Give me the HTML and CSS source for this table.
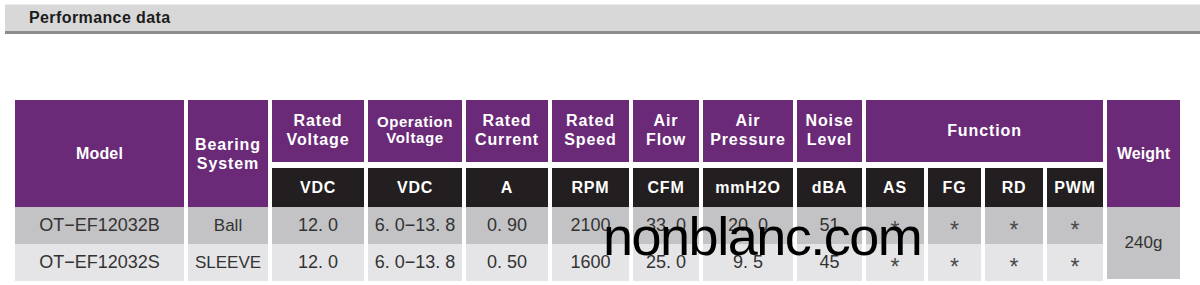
FILE: index.html
```html
<!DOCTYPE html>
<html lang="en">
<head>
<meta charset="utf-8">
<title>Performance data</title>
<link rel="stylesheet" href="styles.css">
</head>
<body>
<div class="titlebar"><span class="title">Performance data</span></div>
<div class="wrap">
  <div class="spec">
    <div class="h c1 span3 model">Model</div>
    <div class="h c2 span3">Bearing<br>System</div>
    <div class="h c3">Rated<br>Voltage</div>
    <div class="h c4 small">Operation<br>Voltage</div>
    <div class="h c5">Rated<br>Current</div>
    <div class="h c6">Rated<br>Speed</div>
    <div class="h c7">Air<br>Flow</div>
    <div class="h c8">Air<br>Pressure</div>
    <div class="h c9">Noise<br>Level</div>
    <div class="h func">Function</div>
    <div class="h c14 span3 plain">Weight</div>

    <div class="u c3">VDC</div>
    <div class="u c4">VDC</div>
    <div class="u c5">A</div>
    <div class="u c6">RPM</div>
    <div class="u c7">CFM</div>
    <div class="u c8">mmH2O</div>
    <div class="u c9">dBA</div>
    <div class="u c10">AS</div>
    <div class="u c11">FG</div>
    <div class="u c12">RD</div>
    <div class="u c13">PWM</div>

    <div class="d r1 c1">OT−EF12032B</div>
    <div class="d r1 c2 sm">Ball</div>
    <div class="d r1 c3">12. 0</div>
    <div class="d r1 c4">6. 0−13. 8</div>
    <div class="d r1 c5">0. 90</div>
    <div class="d r1 c6">2100</div>
    <div class="d r1 c7">33. 0</div>
    <div class="d r1 c8">20. 0</div>
    <div class="d r1 c9">51</div>
    <div class="d r1 c10 star">*</div>
    <div class="d r1 c11 star">*</div>
    <div class="d r1 c12 star">*</div>
    <div class="d r1 c13 star">*</div>
    <div class="d r1 c14 weight">240g</div>

    <div class="d r2 c1">OT−EF12032S</div>
    <div class="d r2 c2 sm">SLEEVE</div>
    <div class="d r2 c3">12. 0</div>
    <div class="d r2 c4">6. 0−13. 8</div>
    <div class="d r2 c5">0. 50</div>
    <div class="d r2 c6">1600</div>
    <div class="d r2 c7">25. 0</div>
    <div class="d r2 c8">9. 5</div>
    <div class="d r2 c9">45</div>
    <div class="d r2 c10 star">*</div>
    <div class="d r2 c11 star">*</div>
    <div class="d r2 c12 star">*</div>
    <div class="d r2 c13 star">*</div>
  </div>
  <div class="watermark">nonblanc.com</div>
</div>
</body>
</html>
```

FILE: styles.css
```css
html, body {
  margin: 0;
  padding: 0;
  background: #ffffff;
}

body {
  font-family: "Liberation Sans", Arial, sans-serif;
  width: 1200px;
  height: 285px;
  overflow: hidden;
}

.titlebar {
  margin: 5px 0 0 5px;
  height: 26px;
  background: #d8d8d8;
  border-bottom: 3px solid #8c8c8c;
  display: flex;
  align-items: center;
  padding-left: 24px;
  box-shadow: 0 -1px 0 #ececec;
}

.title {
  font-size: 16px;
  font-weight: bold;
  letter-spacing: 0.4px;
  color: #1c1c1c;
}

.wrap {
  position: relative;
  padding: 66px 0 0 15px;
}

.spec {
  display: grid;
  grid-template-columns: 169px 80px 92px 94px 82px 77px 66px 90px 65px 58px 53px 58px 56px 73px;
  grid-template-rows: 62px 6px 39px 37px 37px;
  column-gap: 4px;
  row-gap: 0;
}

.spec > div {
  display: flex;
  align-items: center;
  justify-content: center;
  text-align: center;
}

.c1 { grid-column: 1; }
.c2 { grid-column: 2; }
.c3 { grid-column: 3; }
.c4 { grid-column: 4; }
.c5 { grid-column: 5; }
.c6 { grid-column: 6; }
.c7 { grid-column: 7; }
.c8 { grid-column: 8; }
.c9 { grid-column: 9; }
.c10 { grid-column: 10; }
.c11 { grid-column: 11; }
.c12 { grid-column: 12; }
.c13 { grid-column: 13; }
.c14 { grid-column: 14; }

.h {
  grid-row: 1;
  background: #6a2a78;
  color: #ffffff;
  font-weight: bold;
  font-size: 16px;
  line-height: 19px;
  letter-spacing: 0.9px;
  padding-bottom: 3px;
}

.h.span3 {
  grid-row: 1 / 4;
  padding-bottom: 0;
}

.h.model {
  font-size: 16px;
  letter-spacing: 0.2px;
}

.h.plain {
  letter-spacing: 0;
}

.h.small {
  font-size: 15px;
  line-height: 16px;
  letter-spacing: 0.6px;
}

.h.func {
  grid-column: 10 / 14;
  padding-bottom: 2px;
}

.u {
  grid-row: 3;
  background: #231f20;
  color: #ffffff;
  font-weight: bold;
  font-size: 16px;
  letter-spacing: 0.8px;
}

.d {
  font-size: 18px;
  color: #333333;
}

.d.sm {
  font-size: 17px;
}

.r1 {
  grid-row: 4;
  background: #c3c3c5;
}

.r2 {
  grid-row: 5;
  background: #e5e5e7;
}

.d.weight {
  grid-row: 4 / 6;
  margin-bottom: 2px;
  background: #c3c3c5;
  font-size: 17px;
}

.d.star {
  padding-top: 10px;
  font-size: 23px;
  color: #4a4a4a;
  box-sizing: border-box;
}

.watermark {
  position: absolute;
  left: 603px;
  top: 175px;
  font-family: "Liberation Sans", Arial, sans-serif;
  font-size: 54px;
  letter-spacing: -1.5px;
  color: #000000;
  line-height: 1;
  pointer-events: none;
}
```
